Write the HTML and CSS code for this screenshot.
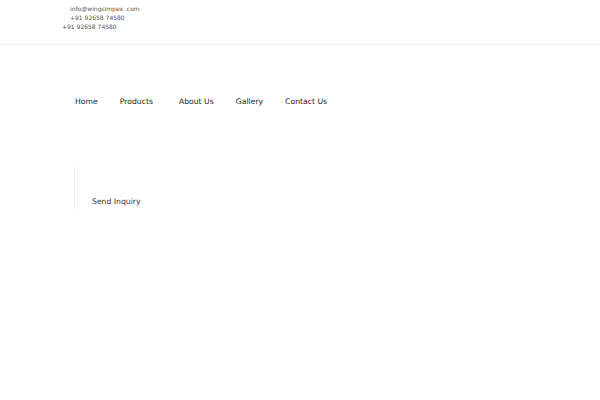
FILE: index.html
```html
<!DOCTYPE html>
<html>
<head>
<meta charset="utf-8">
<link rel="stylesheet" href="styles.css">
</head>
<body>
<header class="topbar">
  <div class="contact">
    <div class="line indent">info@wingsimpex .com</div>
    <div class="line indent">+91 92658 74580</div>
    <div class="line">+91 92658 74580</div>
  </div>
</header>
<nav class="menu">
  <a class="item">Home</a>
  <a class="item products">Products</a>
  <a class="item">About Us</a>
  <a class="item">Gallery</a>
  <a class="item">Contact Us</a>
</nav>
<div class="inquiry">
  <span class="inquiry-text">Send Inquiry</span>
</div>
</body>
</html>
```
FILE: styles.css
```css
html, body {
  margin: 0;
  padding: 0;
  background: #ffffff;
  font-family: "DejaVu Sans", Verdana, sans-serif;
}
.topbar {
  height: 44px;
  border-bottom: 1px solid #f0f0f0;
  box-sizing: content-box;
}
.contact {
  padding: 4px 0 0 62px;
  display: flex;
  flex-direction: column;
  font-size: 6px;
  line-height: 9px;
  color: #555;
}
.line.indent {
  margin-left: 8px;
}
.menu {
  display: flex;
  gap: 22px;
  padding: 51px 0 0 75px;
  font-size: 7.7px;
  line-height: 12px;
  color: #222;
}
.item {
  text-decoration: none;
  color: inherit;
}
.item.products {
  padding-right: 4px;
}
.inquiry {
  margin: 59px 0 0 74px;
  border-left: 1px solid #f0f0f0;
  height: 42px;
  box-sizing: border-box;
  padding: 29px 0 0 17px;
  font-size: 7.7px;
  line-height: 12px;
  color: #333;
}
```
